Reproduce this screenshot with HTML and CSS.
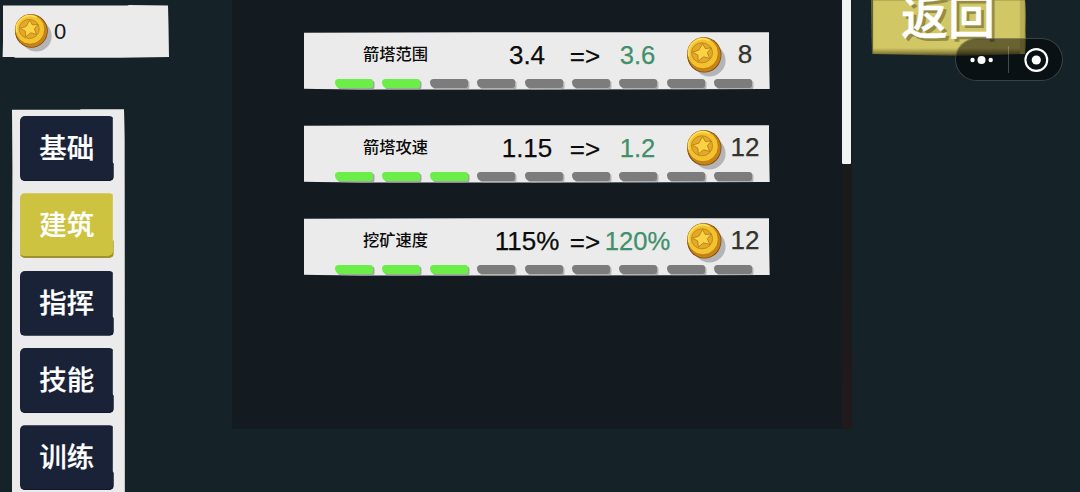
FILE: index.html
```html
<!DOCTYPE html>
<html lang="zh-CN">
<head>
    <meta charset="UTF-8">
    <meta name="viewport" content="width=device-width, initial-scale=1.0">
    <title>升级</title>
    <link rel="stylesheet" href="styles.css">
</head>
<body>

    <svg class="sprites" width="0" height="0">
        <symbol id="coin" viewBox="0 0 44 44">
            <ellipse cx="25" cy="26" rx="16.5" ry="16.5" fill="#b3b4b8"/>
            <ellipse cx="19.7" cy="20.4" rx="17.6" ry="18" fill="#7a4a12"/>
            <ellipse cx="19.8" cy="20.4" rx="16.7" ry="17.1" fill="#c98216"/>
            <ellipse cx="18.3" cy="18.6" rx="15.8" ry="16" fill="#f3c22f" stroke="#a76b12" stroke-width="0.7"/>
            <path d="M4 22 A14.6 14.8 0 0 1 25 5.6" fill="none" stroke="#fbe05c" stroke-width="1.6"/>
            <ellipse cx="17.4" cy="18.2" rx="10.8" ry="10.3" fill="#e3a928" stroke="#b87d17" stroke-width="0.8"/>
            <path d="M18 8.8 L20.8 13.9 L26.9 13.2 L22.9 18.2 L25.3 24 L19 22.3 L13.6 26.8 L13.1 20.5 L7.7 17.6 L14.2 15.4 Z" fill="#fbd244" stroke="#b0761a" stroke-width="0.8" stroke-linejoin="round"/>
        </symbol>
    </svg>

    <div class="screen">
        <div class="left">
            <div class="wallet">
                <svg class="coin"><use href="#coin"/></svg>
                <span>0</span>
            </div>
            <div class="menu">
                <div class="tab">基础</div>
                <div class="tab active">建筑</div>
                <div class="tab">指挥</div>
                <div class="tab">技能</div>
                <div class="tab">训练</div>
            </div>
        </div>

        <div class="panel">
            <div class="list">
                <div class="card">
                    <div class="info">
                        <span class="name">箭塔范围</span>
                        <span>3.4</span>
                        <span class="arrow">=&gt;</span>
                        <span class="next">3.6</span>
                        <svg class="coin"><use href="#coin"/></svg>
                        <span class="cost">8</span>
                    </div>
                    <div class="levels">
                        <i class="on"></i><i class="on"></i><i></i><i></i><i></i><i></i><i></i><i></i><i></i>
                    </div>
                </div>
                <div class="card">
                    <div class="info">
                        <span class="name">箭塔攻速</span>
                        <span>1.15</span>
                        <span class="arrow">=&gt;</span>
                        <span class="next">1.2</span>
                        <svg class="coin"><use href="#coin"/></svg>
                        <span class="cost">12</span>
                    </div>
                    <div class="levels">
                        <i class="on"></i><i class="on"></i><i class="on"></i><i></i><i></i><i></i><i></i><i></i><i></i>
                    </div>
                </div>
                <div class="card">
                    <div class="info">
                        <span class="name">挖矿速度</span>
                        <span>115%</span>
                        <span class="arrow">=&gt;</span>
                        <span class="next">120%</span>
                        <svg class="coin"><use href="#coin"/></svg>
                        <span class="cost">12</span>
                    </div>
                    <div class="levels">
                        <i class="on"></i><i class="on"></i><i class="on"></i><i></i><i></i><i></i><i></i><i></i><i></i>
                    </div>
                </div>
            </div>
            <div class="scrollbar"><div class="thumb"></div></div>
        </div>

        <div class="right">
            <div class="back"><span>返回</span></div>
        </div>

        <div class="capsule">
            <svg width="108" height="43" viewBox="0 0 108 43">
                <g fill="#fff">
                    <circle cx="17.5" cy="22" r="2.2"/>
                    <circle cx="26.5" cy="22" r="4"/>
                    <circle cx="35.7" cy="22" r="2.2"/>
                    <circle cx="81.3" cy="22" r="4.6"/>
                </g>
                <path d="M53.5 8v27" stroke="#fff" stroke-opacity="0.24"/>
                <circle cx="81.3" cy="22" r="10.9" fill="none" stroke="#fff" stroke-width="2.1"/>
            </svg>
        </div>
    </div>

</body>
</html>
```

FILE: styles.css
```css
body {
    margin: 0;
    background-color: #152228;
    font-family: "Liberation Sans", "Noto Sans CJK SC", sans-serif;
    overflow: hidden;
}

.sprites {
    display: block;
}

.screen {
    position: relative;
    display: flex;
    align-items: flex-start;
    width: 1080px;
    height: 492px;
    overflow: hidden;
}

.left {
    width: 232px;
}

/* papel recortado */
.wallet {
    display: flex;
    align-items: center;
    box-sizing: border-box;
    width: 167px;
    height: 53px;
    margin: 5px 0 0 2px;
    padding-left: 11px;
    background-color: #ebebeb;
    color: #161616;
    font-size: 22px;
    clip-path: polygon(1px 0.5px, 75% 0.5px, 76% 0, 166px 0.5px, 166.5px 20px, 167px 52px, 70% 52.7px, 8% 52.7px, 7% 52px, 0.6px 52px, 1px 37px);
}

.wallet .coin {
    width: 41px;
    height: 41px;
    margin-top: 1px;
}

.wallet span {
    padding-top: 1px;
}

.menu {
    display: flex;
    flex-direction: column;
    gap: 12.3px;
    box-sizing: border-box;
    width: 113px;
    height: 420px;
    margin: 51px 0 0 12px;
    padding: 7px 11px 0 8px;
    background-color: #ebebeb;
    box-shadow: inset -1px 0 0 #c4c6c7;
    clip-path: polygon(0 0.7px, 60% 0.7px, 61% 0.3px, 112px 0.3px, 112.5px 30px, 113px 100%, 0 100%, 0 170px, 0.4px 60px);
}

.tab {
    flex: none;
    box-sizing: border-box;
    width: 93.5px;
    height: 65px;
    border-radius: 5px;
    background-color: #1a2237;
    box-shadow: inset -1px -1px 0 #121829;
    color: #fff;
    font-size: 27.5px;
    font-weight: 500;
    -webkit-text-stroke: 0.2px #fff;
    line-height: 65px;
    text-align: center;
    clip-path: polygon(0 0, 92.8px 0, 92.8px 46px, 93.5px 48px, 93.5px 65px, 0 65px);
}

.tab.active {
    background-color: #cec340;
    box-shadow: inset -1px -2px 0 #9c9330;
}

.panel {
    display: flex;
    width: 620px;
    height: 429px;
    background-color: #141b20;
}

.list {
    display: flex;
    flex-direction: column;
    gap: 35px;
    width: 610px;
    padding: 32px 0 0 72px;
    box-sizing: border-box;
}

.card {
    width: 466px;
    height: 58px;
    background-color: #ebebeb;
    clip-path: polygon(0 0.8px, 38% 0.3px, 465px 0.3px, 465px 20px, 465.7px 57px, 80% 57.3px, 50% 57.5px, 12% 57.6px, 3% 57px, 0 56.8px, 0 50%);
}

.info {
    display: grid;
    grid-template-columns: 183px 80px 36px 69px 58px 30px;
    align-items: center;
    height: 46px;
    color: #0b0b0b;
    font-size: 26px;
    text-align: center;
    -webkit-text-stroke-width: 0.25px;
}

.info span {
    padding-top: 1px;
}

.info .name {
    font-size: 16.3px;
    font-weight: 500;
    padding: 0 0 4px;
    -webkit-text-stroke-width: 0;
}

.info .arrow {
    padding-top: 2px;
}

.info .next {
    color: #41906a;
    font-size: 25.6px;
}

.info .cost {
    color: #34332c;
    padding: 0 0 1px;
}

.info .coin {
    width: 43px;
    height: 43px;
    margin: 2px 0 0 13px;
}

.levels {
    display: flex;
    gap: 9.4px;
    margin: 1px 0 0 31px;
}

.levels i {
    width: 38px;
    height: 9px;
    border-radius: 4px 3px 3px 6px;
    background-color: #7c7c7c;
    box-shadow: 1.5px 1.5px 0 #b2b2b2;
}

.levels .on {
    background-color: #6bee48;
    box-shadow: 1.5px 1.5px 0 #a0a99d;
}

.scrollbar {
    width: 10px;
    background: linear-gradient(#191a1b 60%, #211a1c);
}

.thumb {
    width: 9px;
    height: 164px;
    border-radius: 0 0 1px 1px;
    background-color: #f0f4f5;
}

.right {
    flex: 1;
}

.back {
    display: flex;
    justify-content: center;
    align-items: flex-end;
    box-sizing: border-box;
    width: 156px;
    height: 56px;
    margin-left: 19px;
    padding: 0 2px 0 0;
    background: linear-gradient(#d2c765 48px, #aaa04b 51px, #7d7536 54px, #2b2a18 56px);
    box-shadow: inset 2px 0 1px #5b5525, inset -2px 0 1px #4c4825, inset -7px 0 1px #b9ae54;
    color: #fff;
    font-size: 47px;
    font-weight: 500;
    -webkit-text-stroke: 0.4px #fff;
    text-shadow: 3px 3px 0 #958b45;
    clip-path: polygon(0.5px 0, 154px 0, 155px 30px, 154px 54px, 90px 56px, 1px 54px);
}

.back span {
    line-height: 48px;
    padding-bottom: 14px;
}

/* botones del mini programa, encima del juego */
.capsule {
    position: absolute;
    left: 955px;
    top: 38px;
    width: 108px;
    height: 43px;
    border-radius: 22px;
    background-color: rgba(0, 0, 0, 0.5);
    box-shadow: inset 0 0 0 1px rgba(255, 255, 255, 0.2);
}

.capsule svg {
    display: block;
}
```
